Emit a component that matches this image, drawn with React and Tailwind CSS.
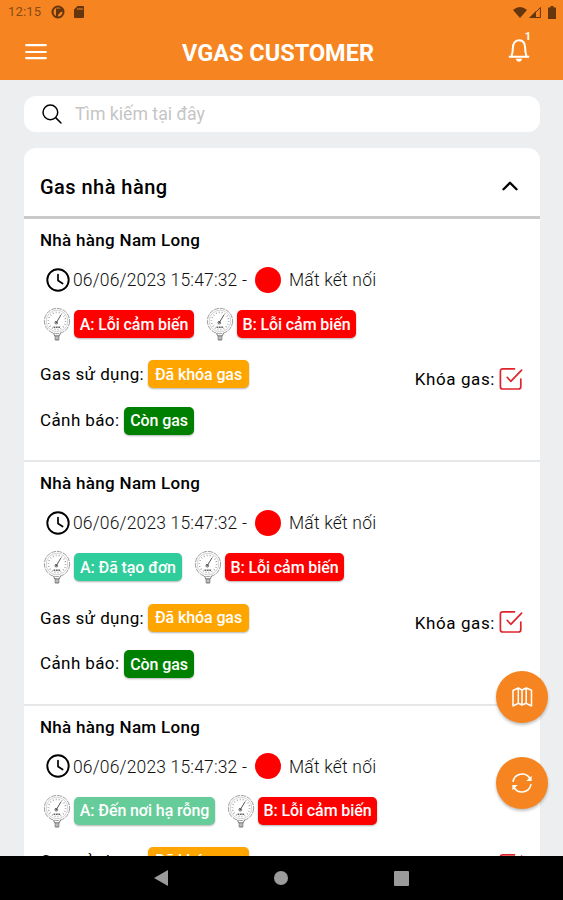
import { IoSearchOutline } from "react-icons/io5";
import { ChevronUp } from "lucide-react";

/* ================= DATA ================= */
const restaurants = [
  {
    id: 1,
    name: "Nhà hàng Nam Long",
    time: "06/06/2023 15:47:32",
    sensors: [
      { label: "A: Lỗi cảm biến", style: "w-[120px] bg-[#ff0000]" },
      { label: "B: Lỗi cảm biến", style: "w-[119px] bg-[#ff0000]" },
    ],
  },
  {
    id: 2,
    name: "Nhà hàng Nam Long",
    time: "06/06/2023 15:47:32",
    sensors: [
      { label: "A: Đã tạo đơn", style: "w-[108px] bg-[#2fcd9b]" },
      { label: "B: Lỗi cảm biến", style: "w-[119px] bg-[#ff0000]" },
    ],
  },
  {
    id: 3,
    name: "Nhà hàng Nam Long",
    time: "06/06/2023 15:47:32",
    sensors: [
      { label: "A: Đến nơi hạ rỗng", style: "w-[141px] bg-[#66cc99]" },
      { label: "B: Lỗi cảm biến", style: "w-[119px] bg-[#ff0000]" },
    ],
  },
];

/* ================= ICONS ================= */
function MenuIcon() {
  return (
    <svg viewBox="0 0 22 18" className="ml-1 h-[18px] w-[22px]" stroke="white" strokeWidth="2.2" strokeLinecap="round">
      <path d="M1.200 2.200h19.600M1.200 9h19.600M1.200 15.200h19.600" />
    </svg>
  );
}

function BellIcon() {
  return (
    <svg viewBox="0 0 24 26" className="h-[26px] w-6" fill="none" stroke="white" strokeWidth="2">
      <path d="M1.800 19.800h20.400M4.800 20v-2.200c.9-2 1-3.400 1-6.300C5.800 6.500 8 3.300 12 3.300s6.200 3.200 6.200 8.200c0 2.900.1 4.300 1 6.300V20" />
      <path d="M8.800 21.800h6.400c-.5 1.800-1.600 2.900-3.200 2.900s-2.700-1.100-3.200-2.900z" fill="white" stroke="none" />
    </svg>
  );
}

function ClockIcon() {
  return (
    <svg viewBox="0 0 24 24" className="ml-[5.500px] h-6 w-6 shrink-0" fill="none" stroke="black" strokeWidth="1.900" strokeLinecap="round" strokeLinejoin="round">
      <circle cx="12" cy="12" r="10.700" />
      <path d="M12 6.500v6l4.600 3" strokeWidth="1.700" />
    </svg>
  );
}

function GaugeIcon() {
  return (
    <svg viewBox="0 0 28 34" className="h-[34px] w-7 shrink-0" fill="none" stroke="#858585" strokeWidth="0.8">
      <circle cx="14" cy="14" r="12.600" strokeDasharray="5 0.9" />
      <circle cx="14" cy="14" r="10.800" stroke="#b5b5b5" strokeWidth="0.6" />
      <circle cx="14" cy="14" r="8.600" stroke="#999" strokeWidth="1.600" strokeDasharray="0.8 2.200" />
      <path d="M13 16.200l5-8.400M12 14.500l2.600 1.700" stroke="#444" strokeWidth="0.9" />
      <circle cx="13.200" cy="15.800" r="1.300" stroke="#555" />
      <path d="M10.500 20.200h7" stroke="#666" strokeWidth="1.600" strokeDasharray="1.800 0.600" />
      <path d="M10.500 26.300l1.200 2.500h4.600l1.200-2.500M12.200 28.800v4.200h3.600v-4.200M14 29v4" stroke="#555" />
    </svg>
  );
}

function CheckIcon() {
  return (
    <svg viewBox="0 0 24 24" className="h-6 w-6" fill="none" stroke="#e0242c" strokeWidth="1.700" strokeLinecap="round" strokeLinejoin="round">
      <path d="M15.500 1.800H3.700a2.300 2.300 0 0 0-2.300 2.300v15.600A2.300 2.300 0 0 0 3.700 22h15.800a2.300 2.300 0 0 0 2.300-2.300V12" />
      <path d="M8.200 10.300l3.600 4L22.600 3.200" />
    </svg>
  );
}

function MapIcon() {
  return (
    <svg viewBox="0 0 22 22" className="h-[22px] w-[22px]" fill="none" stroke="white" strokeWidth="1.500" strokeLinejoin="round">
      <path d="M2 4.500l5.300-2.500 3.700 2v15L7.300 17.300 2 20zM11 4l4.200-2L20.500 4.200V20l-5.300-2.700L11 19M7.300 2v15.300M15.200 2v15.300" />
    </svg>
  );
}

function SyncIcon() {
  return (
    <svg viewBox="0 0 22 22" className="h-[22px] w-[22px]" fill="none" stroke="white" strokeWidth="1.600">
      <path d="M2 9.800A9.200 9.200 0 0 1 18.800 6.200M20 12.200A9.200 9.200 0 0 1 3.200 15.800" />
      <path d="M20.600 3.700v5.200h-5.300zM1.400 18.300v-5.200h5.300z" fill="white" stroke="none" />
    </svg>
  );
}

/* ================= STATUS BAR ================= */
function StatusBar() {
  return (
    <div className="flex h-6 items-center justify-between pl-2 pr-[7px] text-[#65350e]">
      <div className="flex items-center">
        <span className="w-[43px] text-[13px] tracking-[0.2px] text-[#8a4a16]">12:15</span>
        <svg viewBox="0 0 14 14" className="h-[14px] w-[14px]">
          <circle cx="7" cy="7" r="5.500" fill="none" stroke="currentColor" strokeWidth="2" />
          <path d="M5 3.500h7.500v3.200H10L7 10v3H5z" fill="currentColor" />
        </svg>
        <svg viewBox="0 0 10 12" className="ml-[9px] h-3 w-2.5" fill="currentColor">
          <path fillRule="evenodd" d="M3.500 0H9a1 1 0 0 1 1 1v10a1 1 0 0 1-1 1H1a1 1 0 0 1-1-1V3.500zM3.500 2v2h1V2zm2 0v2h1V2zm2 0v2h1V2z" />
        </svg>
      </div>
      <div className="flex items-center">
        <svg viewBox="0 0 14 11" className="h-[11px] w-[14px]" fill="currentColor">
          <path d="M0 3Q7-3 14 3L7 11z" />
        </svg>
        <svg viewBox="0 0 12 12" className="ml-0.5 h-3 w-3" fill="currentColor">
          <path d="M0 12L7 5v7z" />
          <path d="M1.500 11.500L11.400 1.500v10z" fill="none" stroke="currentColor" />
        </svg>
        <svg viewBox="0 0 8 13" className="ml-[7px] h-[13px] w-2" fill="currentColor">
          <path d="M2.500 0h3v1.500H8V13H0V1.500h2.500z" />
        </svg>
      </div>
    </div>
  );
}

function Tag({ children, className }) {
  return (
    <span className={`flex h-7 items-center justify-center whitespace-nowrap rounded-[5px] pt-px text-[16px] font-medium tracking-[-0.1px] text-white shadow-[0_1px_2px_rgba(0,0,0,0.3)] ${className}`}>
      {children}
    </span>
  );
}

function RestaurantItem({ item }) {
  return (
    <div className="h-[243.400px] shrink-0 border-b-2 border-[#e6e7e8] pl-4 pr-[17px]">
      <h3 className="pt-[9px] text-[17px] font-medium leading-6 tracking-[0.3px]">{item.name}</h3>

      <div className="mt-[13.500px] flex h-7 items-center text-[17.500px] font-light text-[#111]">
        <ClockIcon />
        <span className="ml-[3.500px] w-[182px] whitespace-nowrap pt-px tracking-[0.160px]">{item.time} -</span>
        <span className="h-[26px] w-[26px] rounded-full bg-[#ff0000]" />
        <span className="ml-2 pt-px tracking-[0.200px]">Mất kết nối</span>
      </div>

      <div className="mt-[13.500px] flex h-[34px] items-center">
        {item.sensors.map((sensor, index) => (
          <div key={index} className="mr-[9px] flex items-center pl-[3px]">
            <GaugeIcon />
            <Tag className={`ml-[3px] ${sensor.style}`}>{sensor.label}</Tag>
          </div>
        ))}
      </div>

      <div className="mt-[16.200px] flex h-[34px] items-center text-[17px] tracking-[0.4px]">
        <span className="w-[108px] whitespace-nowrap pt-0.5">Gas sử dụng:</span>
        <Tag className="w-[101px] bg-[#ffa500]">Đã khóa gas</Tag>
        <div className="ml-auto mt-[9px] flex items-center">
          <span className="mr-1 pt-[3px] tracking-[0.600px]">Khóa gas:</span>
          <CheckIcon />
        </div>
      </div>

      <div className="mt-[12.500px] flex h-[34px] items-center text-[17px] tracking-[0.4px]">
        <span className="w-[84px] whitespace-nowrap">Cảnh báo:</span>
        <Tag className="w-[70px] bg-[#008000]">Còn gas</Tag>
      </div>
    </div>
  );
}

function App() {
  return (
    <div className="relative flex h-[900px] w-full flex-col overflow-hidden bg-[#eceeef] font-['Roboto',sans-serif] text-black">
      {/* ===== HEADER ===== */}
      <header className="h-20 shrink-0 bg-[#f68521]">
        <StatusBar />
        <div className="flex h-14 items-center justify-between pl-[21px] pr-8">
          <MenuIcon />
          <h1 className="ml-0.5 pt-[3px] text-[23.500px] font-bold text-white">VGAS CUSTOMER</h1>
          <button className="relative -mt-1">
            <BellIcon />
            <span className="absolute right-0 -top-[8px] text-[11px] font-bold text-white">1</span>
          </button>
        </div>
      </header>

      <main className="flex min-h-0 flex-1 flex-col overflow-hidden pl-6 pt-4">
        {/* ===== SEARCH ===== */}
        <div className="flex h-9 w-[516px] shrink-0 items-center rounded-[12px] bg-white pl-4">
          <IoSearchOutline className="h-6 w-6" />
          <span className="ml-[11px] pt-px text-[17.700px] text-[#c5c5c5]">Tìm kiếm tại đây</span>
        </div>

        {/* ===== RESTAURANT LIST ===== */}
        <section className="mt-4 flex w-[516px] flex-col rounded-t-[12px] bg-white">
          <div className="flex h-[71px] shrink-0 items-center justify-between border-b-3 border-[#cacaca] pl-4 pr-[17px] pt-2">
            <h2 className="pt-0.5 text-[20px] font-medium tracking-[0.460px]">Gas nhà hàng</h2>
            <ChevronUp className="h-[26px] w-[26px]" strokeWidth={2.200} />
          </div>
          {restaurants.map((item) => (
            <RestaurantItem key={item.id} item={item} />
          ))}
        </section>
      </main>

      {/* ===== FLOATING BUTTONS ===== */}
      <div className="absolute right-[15.500px] top-[671px] flex flex-col gap-[34px]">
        <button className="flex h-13 w-13 items-center justify-center rounded-full bg-[#f68521] shadow-[0_2px_3px_rgba(0,0,0,0.25)]">
          <MapIcon />
        </button>
        <button className="flex h-13 w-13 items-center justify-center rounded-full bg-[#f68521] shadow-[0_2px_3px_rgba(0,0,0,0.25)]">
          <SyncIcon />
        </button>
      </div>

      {/* ===== ANDROID NAVIGATION ===== */}
      <nav className="flex h-11 shrink-0 items-center justify-center gap-[106px] bg-black">
        <svg viewBox="0 0 14 16" className="h-4 w-[14px]" fill="#9b9b9b">
          <path d="M14 0v16L0 8z" />
        </svg>
        <span className="h-[14px] w-[14px] rounded-full bg-[#9b9b9b]" />
        <span className="h-[15px] w-[15px] rounded-[1px] bg-[#9b9b9b]" />
      </nav>
    </div>
  );
}

export default App;
